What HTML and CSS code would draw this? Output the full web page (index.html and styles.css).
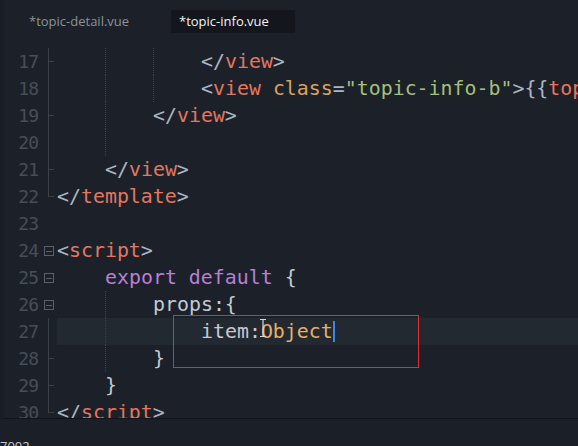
FILE: index.html
```html
<!DOCTYPE html>
<html lang="zh">
<head>
    <meta charset="UTF-8">
    <meta name="viewport" content="width=device-width, initial-scale=1.0">
    <title>topic-info.vue</title>
    <link rel="stylesheet" href="styles.css">
</head>
<body>

    <div class="window">
        <div class="tabs">
            <div class="tab">*topic-detail.vue</div>
            <div class="tab active">*topic-info.vue</div>
        </div>

        <div class="editor">
            <div class="gutter">
                <div class="row"><span class="num">17</span><span class="fold tick"></span></div>
                <div class="row"><span class="num">18</span><span class="fold line"></span></div>
                <div class="row"><span class="num">19</span><span class="fold tick"></span></div>
                <div class="row"><span class="num">20</span><span class="fold line"></span></div>
                <div class="row"><span class="num">21</span><span class="fold tick"></span></div>
                <div class="row"><span class="num">22</span><span class="fold end"></span></div>
                <div class="row"><span class="num">23</span><span class="fold"></span></div>
                <div class="row"><span class="num">24</span><span class="fold box"></span></div>
                <div class="row"><span class="num">25</span><span class="fold box"></span></div>
                <div class="row"><span class="num">26</span><span class="fold box"></span></div>
                <div class="row"><span class="num">27</span><span class="fold line"></span></div>
                <div class="row"><span class="num">28</span><span class="fold tick"></span></div>
                <div class="row"><span class="num">29</span><span class="fold tick"></span></div>
                <div class="row"><span class="num">30</span><span class="fold end"></span></div>
            </div>

            <div class="code">
                <div class="row"><span class="ind"></span><span class="ind g"></span><span class="ind g"></span><span class="p">&lt;/</span><span class="tag">view</span><span class="p">&gt;</span></div>
                <div class="row"><span class="ind"></span><span class="ind g"></span><span class="ind g"></span><span class="p">&lt;</span><span class="tag">view</span> <span class="attr">class</span><span class="p">=</span><span class="str">"topic-info-b"</span><span class="p">&gt;{{</span><span class="tag">topic.title}}</span></div>
                <div class="row"><span class="ind"></span><span class="ind g"></span><span class="p">&lt;/</span><span class="tag">view</span><span class="p">&gt;</span></div>
                <div class="row"><span class="ind"></span><span class="ind g"></span></div>
                <div class="row"><span class="ind"></span><span class="p">&lt;/</span><span class="tag">view</span><span class="p">&gt;</span></div>
                <div class="row"><span class="p">&lt;/</span><span class="tag">template</span><span class="p">&gt;</span></div>
                <div class="row"></div>
                <div class="row"><span class="p">&lt;</span><span class="tag">script</span><span class="p">&gt;</span></div>
                <div class="row"><span class="ind"></span><span class="kw">export default</span> <span class="txt">{</span></div>
                <div class="row"><span class="ind"></span><span class="ind g"></span><span class="txt">props:{</span></div>
                <div class="row current"><span class="ind"></span><span class="ind g"></span><span class="ind"></span><span class="txt">item:</span><span class="type">Object</span><span class="caret"></span></div>
                <div class="row"><span class="ind"></span><span class="ind g"></span><span class="txt">}</span></div>
                <div class="row"><span class="ind"></span><span class="txt">}</span></div>
                <div class="row"><span class="p">&lt;/</span><span class="tag">script</span><span class="p">&gt;</span></div>
            </div>

            <div class="mark"></div>
            <svg class="ibeam" width="10" height="20" viewBox="0 0 10 20">
                <path d="M2 1.5h6M5 1.5v17M2 18.5h6" stroke="#d8d8d8" stroke-width="1.2" fill="none"/>
            </svg>
        </div>

        <div class="panel">7002</div>
    </div>

</body>
</html>
```

FILE: styles.css
```css
body {
    margin: 0;
    background-color: #1c2129;
    overflow: hidden;
}

.window {
    width: 578px;
    height: 446px;
    display: flex;
    flex-direction: column;
    border-left: 3px solid #191d24;
    box-sizing: border-box;
}

.tabs {
    height: 42px;
    display: flex;
    align-items: flex-start;
    padding: 10px 0 0 16px;
    box-sizing: border-box;
    background: #1c2129;
    font-family: "Open Sans", sans-serif;
    font-size: 13px;
}

.tab {
    height: 23px;
    line-height: 23px;
    padding: 0 10px;
    width: 110px;
    color: #8b929a;
}

.tab.active {
    width: 106px;
    margin-left: 22px;
    padding-left: 8px;
    background: #13171d;
    color: #f2f2f2;
}

.editor {
    position: relative;
    height: 377px;
    display: flex;
    padding-top: 6px;
    box-sizing: border-box;
    border-bottom: 1px solid #10141a;
    overflow: hidden;
    font-family: "DejaVu Sans Mono", monospace;
    font-size: 19.9px;
}

.row {
    height: 27px;
    line-height: 27px;
    white-space: pre;
    display: flex;
    align-items: stretch;
}

.gutter {
    width: 54px;
    flex-shrink: 0;
}

.num {
    width: 35px;
    text-align: right;
    color: #474e57;
    font-size: 18px;
    letter-spacing: -1px;
}

.fold {
    position: relative;
    width: 19px;
}

.fold.line,
.fold.tick {
    background: linear-gradient(#3a414a, #3a414a) 10px 0 / 1px 100% no-repeat;
}

.fold.tick::after,
.fold.end::after {
    content: "";
    position: absolute;
    left: 10px;
    top: 13px;
    width: 6px;
    border-top: 1px solid #3a414a;
}

.fold.end {
    background: linear-gradient(#3a414a, #3a414a) 10px 0 / 1px 14px no-repeat;
}

.fold.box::after {
    content: "";
    position: absolute;
    left: 6px;
    top: 9px;
    width: 8px;
    height: 8px;
    border: 1px solid #59606a;
    background: linear-gradient(#59606a, #59606a) center / 6px 1px no-repeat;
}

.code {
    flex: 1;
    overflow: hidden;
}

.code .row {
    display: block;
}

.ind {
    display: inline-block;
    width: 48px;
    height: 27px;
    vertical-align: top;
    box-sizing: border-box;
}

.ind.g {
    border-left: 1px dotted #3b424b;
}

.current {
    background: #232931;
}

.p { color: #aab6c6; }
.tag { color: #e5765f; }
.attr { color: #dba15e; }
.str { color: #a6bf7a; }
.kw { color: #b87fd8; }
.txt { color: #c3cad2; }
.type { color: #e2b06c; }

.caret {
    display: inline-block;
    width: 2px;
    height: 21px;
    margin-top: 3px;
    vertical-align: top;
    background: #3f86ea;
}

.mark {
    position: absolute;
    left: 170px;
    top: 273px;
    width: 244px;
    height: 51px;
    border: 1px solid #e02f34;
}

.ibeam {
    position: absolute;
    left: 255px;
    top: 276px;
}

.panel {
    flex: 1;
    overflow: hidden;
    background: #1b2028;
    padding-top: 19px;
    font-family: "Open Sans", sans-serif;
    font-size: 13px;
    line-height: 16px;
    color: #c8c8c8;
    margin-left: -3px;
}
```
